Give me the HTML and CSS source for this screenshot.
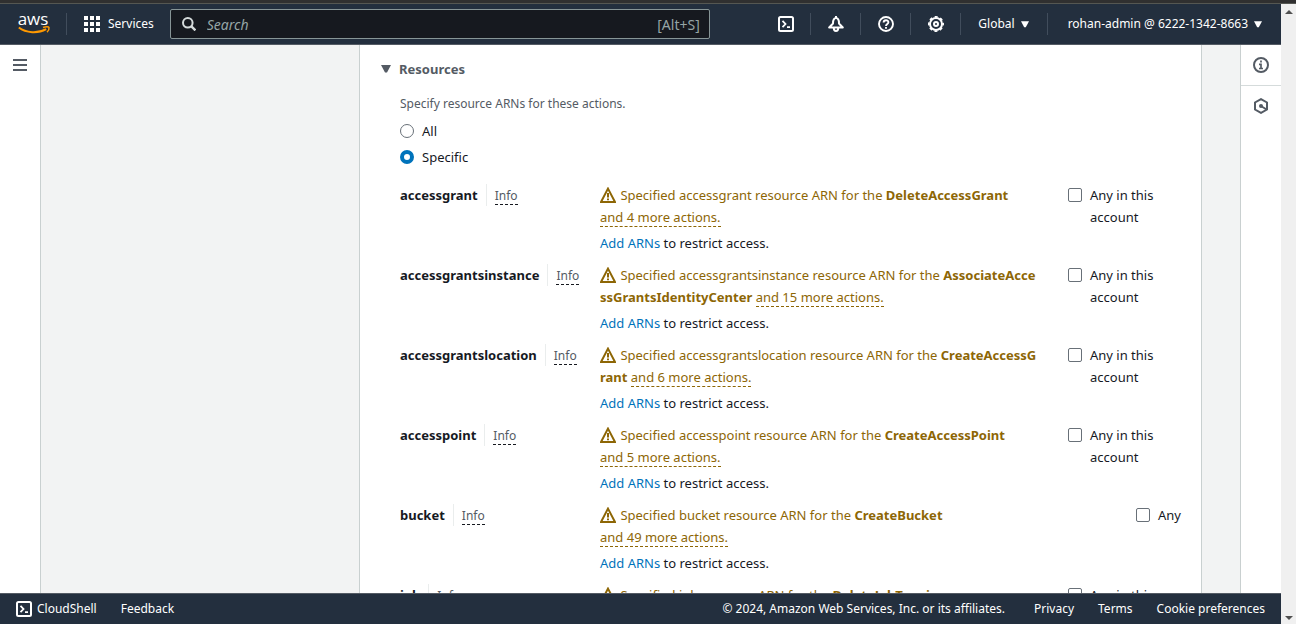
FILE: index.html
```html
<!DOCTYPE html>
<html lang="en">
<head>
<meta charset="utf-8">
<meta name="viewport" content="width=device-width, initial-scale=1">
<title>Create policy</title>
<link rel="stylesheet" href="styles.css">
</head>
<body>
<svg class="sprite" aria-hidden="true">
  <symbol id="shell" viewBox="0 0 16 16"><rect x="1" y="1" width="14" height="14" rx="1.5" fill="none" stroke="currentColor" stroke-width="2"/><path d="M4.5 4.8 7.5 8l-3 3.2M9 11.2h3" fill="none" stroke="currentColor" stroke-width="1.8"/></symbol>
  <symbol id="warn" viewBox="0 0 16 16"><path d="M8 1.6 15 15H1z" fill="none" stroke="currentColor" stroke-width="2"/><path d="M8 6v4.5M8 11.5v1.7" stroke="currentColor" stroke-width="2"/></symbol>
  <symbol id="caret" viewBox="0 0 10 8"><path d="M0 0h10L6 7.4H4z" fill="currentColor"/></symbol>
</svg>
<div class="chrome-edge"></div>
<div class="window">
  <div class="app">
    <header class="topbar">
      <a class="logo" href="#" aria-label="aws"><svg width="32" height="22" viewBox="0 0 32 22"><text x="15" y="12" text-anchor="middle" class="logo-text">aws</text><path d="M.8 14.6C8 20.2 20 20.8 28.2 16.2" fill="none" stroke="#ff9900" stroke-width="1.9"/><path d="M25 14.5c3-1.1 5.700-.9 6 0 .2 1.300-.5 3.500-2 4.700" fill="none" stroke="#ff9900" stroke-width="1.500"/></svg></a>
      <button class="services"><svg width="16" height="16" viewBox="0 0 16 16" fill="currentColor"><path d="M0 0h4v4H0zM6 0h4v4H6zM12 0h4v4h-4zM0 6h4v4H0zM6 6h4v4H6zM12 6h4v4h-4zM0 12h4v4H0zM6 12h4v4H6zM12 12h4v4h-4z"/></svg>Services</button>
      <label class="search">
        <svg width="14" height="14" viewBox="0 0 14 14" fill="none" stroke="currentColor" stroke-width="2"><circle cx="5.800" cy="5.800" r="4.800"/><path d="m9.200 9.200 4.200 4.200" stroke-width="2.400"/></svg>
        <input type="text" placeholder="Search" aria-label="Search">
        <span>[Alt+S]</span>
      </label>
      <nav class="tools">
        <button class="tool" aria-label="CloudShell"><svg width="16" height="16"><use href="#shell"/></svg></button>
        <button class="tool" aria-label="Notifications"><svg width="16" height="16" viewBox="0 0 16 16" fill="none" stroke="currentColor" stroke-width="2"><path d="M8 0v2M1.200 11.500h13.600L11 7.500C11 4 10.500 2 8 2S5 4 5 7.500z" stroke-linejoin="round"/><path d="M5.800 12c0 4 4.400 4 4.400 0"/></svg></button>
        <button class="tool" aria-label="Help"><svg width="16" height="16" viewBox="0 0 16 16" fill="none" stroke="currentColor" stroke-width="1.900"><circle cx="8" cy="8" r="7"/><path d="M5.600 6.600C5.600 3.400 10.400 3.500 10.400 6.300 10.400 8 8 7.900 8 10M8 11v1.800"/></svg></button>
        <button class="tool" aria-label="Settings"><svg width="16" height="16" viewBox="0 0 16 16" fill="none" stroke="currentColor" stroke-width="2"><circle cx="8" cy="8" r="6"/><circle cx="8" cy="8" r="7.200" stroke-width="1.600" stroke-dasharray="3 2.654" stroke-dashoffset="1.500"/><circle cx="8" cy="8" r="2"/></svg></button>
        <button class="menu region">Global<svg width="8" height="7"><use href="#caret"/></svg></button>
        <button class="menu user">rohan-admin @ 6222-1342-8663<svg width="8" height="7"><use href="#caret"/></svg></button>
      </nav>
    </header>
    <div class="body">
      <aside class="rail left"><button aria-label="Open navigation"><svg width="14" height="12" viewBox="0 0 14 12" fill="currentColor"><path d="M0 0h14v2H0zM0 5h14v2H0zM0 10h14v2H0z"/></svg></button></aside>
      <main class="page">
        <section class="panel">
          <h2><svg width="10" height="8"><use href="#caret"/></svg>Resources</h2>
          <fieldset>
            <legend>Specify resource ARNs for these actions.</legend>
            <label class="choice"><input type="radio" name="scope">All</label>
            <label class="choice"><input type="radio" name="scope" checked>Specific</label>
          </fieldset>
          <div class="resources">
            <div class="row"><div class="name"><b>accessgrant</b><a class="info" href="#"><span>Info</span></a></div><div><p class="warning"><svg width="16" height="16"><use href="#warn"/></svg> Specified accessgrant resource ARN for the <b>DeleteAccessGrant</b> <span class="more">and 4 more actions.</span></p><p class="add"><a href="#">Add ARNs</a> to restrict access.</p></div><label class="any"><input type="checkbox">Any in this account</label></div>
            <div class="row"><div class="name"><b>accessgrantsinstance</b><a class="info" href="#"><span>Info</span></a></div><div><p class="warning"><svg width="16" height="16"><use href="#warn"/></svg> Specified accessgrantsinstance resource ARN for the <b>AssociateAccessGrantsIdentityCenter</b> <span class="more">and 15 more actions.</span></p><p class="add"><a href="#">Add ARNs</a> to restrict access.</p></div><label class="any"><input type="checkbox">Any in this account</label></div>
            <div class="row"><div class="name"><b>accessgrantslocation</b><a class="info" href="#"><span>Info</span></a></div><div><p class="warning"><svg width="16" height="16"><use href="#warn"/></svg> Specified accessgrantslocation resource ARN for the <b>CreateAccessGrant</b> <span class="more">and 6 more actions.</span></p><p class="add"><a href="#">Add ARNs</a> to restrict access.</p></div><label class="any"><input type="checkbox">Any in this account</label></div>
            <div class="row"><div class="name"><b>accesspoint</b><a class="info" href="#"><span>Info</span></a></div><div><p class="warning"><svg width="16" height="16"><use href="#warn"/></svg> Specified accesspoint resource ARN for the <b>CreateAccessPoint</b> <span class="more">and 5 more actions.</span></p><p class="add"><a href="#">Add ARNs</a> to restrict access.</p></div><label class="any"><input type="checkbox">Any in this account</label></div>
            <div class="row"><div class="name"><b>bucket</b><a class="info" href="#"><span>Info</span></a></div><div><p class="warning"><svg width="16" height="16"><use href="#warn"/></svg> Specified bucket resource ARN for the <b>CreateBucket</b> <span class="more">and 49 more actions.</span></p><p class="add"><a href="#">Add ARNs</a> to restrict access.</p></div><label class="any"><input type="checkbox">Any</label></div>
            <div class="row"><div class="name"><b>job</b><a class="info" href="#"><span>Info</span></a></div><div><p class="warning"><svg width="16" height="16"><use href="#warn"/></svg> Specified job resource ARN for the <b>DeleteJobTagging</b></p></div><label class="any"><input type="checkbox">Any in this account</label></div>
          </div>
        </section>
      </main>
      <aside class="rail right">
        <button aria-label="Info panel"><svg width="16" height="16" viewBox="0 0 16 16" fill="none" stroke="currentColor" stroke-width="2"><circle cx="8" cy="8" r="7"/><path d="M8 3.500v2M6 7.300h2v4M6 11.500h4" stroke-width="1.700"/></svg></button>
        <button aria-label="Tutorials"><svg width="16" height="16" viewBox="0 0 16 16" fill="none" stroke="currentColor" stroke-width="2"><path d="m8 1.100 6 3.400v7l-6 3.400-6-3.400v-7z"/><path d="m8 8 5.500 3.500"/><circle cx="8" cy="8" r="2" fill="currentColor" stroke="none"/></svg></button>
      </aside>
    </div>
    <footer>
      <a class="cloudshell" href="#"><svg width="16" height="16"><use href="#shell"/></svg>CloudShell</a>
      <a class="feedback" href="#">Feedback</a>
      <span class="copyright">© 2024, Amazon Web Services, Inc. or its affiliates.</span>
      <a href="#">Privacy</a><a href="#">Terms</a><a href="#">Cookie preferences</a>
    </footer>
  </div>
  <div class="scrollbar" aria-hidden="true"><i class="up"></i><i class="track"><i class="thumb"></i></i><i class="down"></i></div>
</div>
</body>
</html>
```
FILE: styles.css
```css
* { box-sizing: border-box; }
body {
  margin: 0;
  height: 100vh;
  display: flex;
  flex-direction: column;
  overflow: hidden;
  font: 13px/22px "Noto Sans", sans-serif;
  color: #16191f;
}
.sprite { position: absolute; width: 0; height: 0; }
svg { display: block; flex: none; }
a { text-decoration: none; color: inherit; }
button { border: 0; padding: 0; background: none; color: inherit; font: inherit; cursor: pointer; }
p, h2 { margin: 0; }
input { margin: 0; }
.chrome-edge { height: 4px; flex: none; background: #303030; border-bottom: 1px solid #555752; }
.window { flex: 1; min-height: 0; display: flex; }
.app { flex: 1; min-width: 0; display: flex; flex-direction: column; }

.topbar {
  flex: none;
  height: 41px;
  display: flex;
  align-items: center;
  background: #232f3e;
  border-bottom: 1px solid #545b64;
  color: #fff;
  font-size: 12px;
}
.logo { padding: 0 16px 0 18px; border-right: 1px solid #414d5c; }
.logo svg { overflow: visible; }
.logo-text { font: 500 17px "Open Sans", sans-serif; fill: #fff; }
.services { display: flex; align-items: center; gap: 8px; padding: 0 16px 0 17px; }
.search {
  flex: 0 1 540px;
  height: 30px;
  display: flex;
  align-items: center;
  gap: 11px;
  padding: 0 9px 0 11px;
  background: #16191f;
  border: 1px solid #879596;
  border-radius: 2px;
  color: #95a5a6;
  font-size: 14px;
}
.search svg { color: #d5dbdb; }
.search input { flex: 1; min-width: 0; border: 0; padding: 2px 0 0; background: none; font: inherit; color: #fff; outline: 0; }
.search span { padding-top: 2px; }
.search input::placeholder { color: #95a5a6; font-style: italic; opacity: 1; }
.tools { margin-left: auto; display: flex; align-items: center; }
.tools > * { height: 22px; border-right: 1px solid #414d5c; }
.tool { width: 50px; display: flex; align-items: center; justify-content: center; }
.menu { display: flex; align-items: center; gap: 6px; padding: 0 18px 0 17px; }
.tools .user { border: 0; padding: 0 19px 0 20px; }

.body { flex: 1; min-height: 0; display: flex; }
.rail { flex: none; width: 41px; background: #fff; color: #545b64; }
.rail button { width: 100%; height: 40px; display: flex; align-items: center; justify-content: center; }
.left { border-right: 1px solid #c9d0d0; }
.right { border-left: 1px solid #c9d0d0; }
.right button + button { height: 41px; border-top: 1px solid #d5dbdb; }
.page { flex: 1; min-width: 0; overflow: hidden; padding: 0 38px 0 318px; background: #f2f3f3; }
.panel { height: max-content; padding: 13px 20px 0; background: #fff; border: solid #c9d0d0; border-width: 0 1px; }
.panel h2 { display: flex; align-items: center; gap: 8px; padding-left: 1px; font-size: 13px; line-height: 22px; color: #545b64; }
fieldset { margin: 0; border: 0; padding: 5px 0 0 20px; }
legend { padding: 13px 0 0; font-size: 12px; color: #545b64; }
.choice { display: flex; align-items: center; gap: 8px; margin-bottom: 4px; }
input[type="radio"], input[type="checkbox"] { appearance: none; flex: none; width: 14px; height: 14px; background: #fff; border: 1px solid #687078; border-radius: 2px; }
input[type="radio"] { border-radius: 50%; }
input[type="radio"]:checked { border: 4px solid #0073bb; }

.resources { padding: 12px 0 0 20px; }
.row { display: grid; grid-template-columns: 200px minmax(0, 1fr) 113px; min-height: 80px; }
.name { display: flex; align-items: flex-start; }
.info { margin-left: 8px; padding: 1px 0 0 8px; border-left: 1px solid #eaeded; font-size: 12px; line-height: 21px; color: #545b64; }
.info span { border-bottom: 1px dashed #16191f; }
.warning { margin-right: 30px; color: #8d6605; word-break: break-all; }
.warning svg { display: inline-block; vertical-align: -3px; margin-right: 1px; }
.more { display: inline-block; line-height: 18px; white-space: nowrap; border-bottom: 1px dashed #8d6605; }
.add { margin-top: 4px; }
.add a { color: #0073bb; }
.any { justify-self: end; display: flex; align-items: flex-start; gap: 8px; }
.any input { margin-top: 4px; }

footer {
  flex: none;
  height: 31px;
  display: flex;
  align-items: center;
  gap: 24px;
  padding: 0 16px;
  background: #232f3e;
  border-top: 1px solid #545b64;
  color: #fff;
  font-size: 12px;
}
.cloudshell { display: flex; align-items: center; gap: 5px; }
.copyright { margin: 0 5px 0 auto; }

.scrollbar { flex: none; width: 15px; display: flex; flex-direction: column; align-items: center; background: #f0f0f0; }
.scrollbar i { display: block; }
.up, .down { border: 4px solid transparent; margin: 2px 0 5px; }
.up { border-bottom-color: #505050; }
.down { border-top-color: #505050; margin: 5px 0 0; }
.track { flex: 1; width: 11px; display: grid; grid-template-rows: 39fr 26fr 34fr; }
.thumb { grid-row: 2; background: #c1c1c1; }
```
